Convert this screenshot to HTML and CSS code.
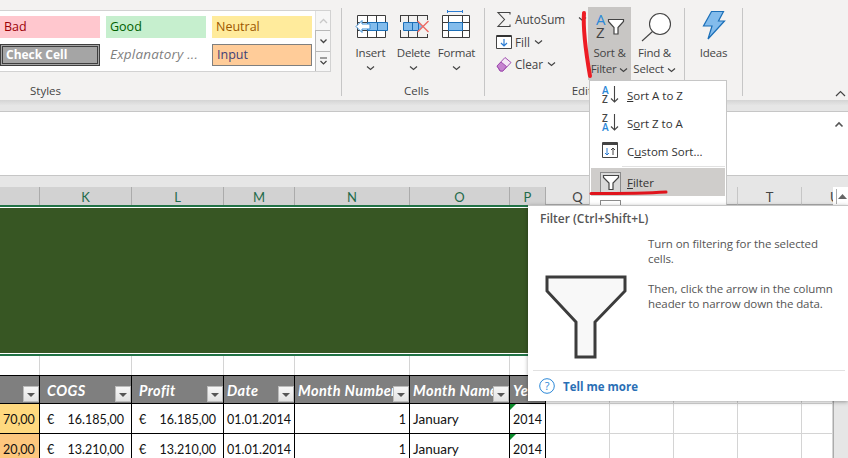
FILE: index.html
```html
<!DOCTYPE html>
<html lang="en">
<head>
  <meta charset="UTF-8" />
  <title>Excel Filter</title>
  <link rel="stylesheet" href="styles.css">
</head>
<body>
<div class="window">
  <div class="ribbon">
    <section class="group group-styles">
      <div class="gallery">
        <div class="style-grid">
          <div class="style style-bad">Bad</div>
          <div class="style style-good">Good</div>
          <div class="style style-neutral">Neutral</div>
          <div class="style style-check">Check Cell</div>
          <div class="style style-expl">Explanatory ...</div>
          <div class="style style-input">Input</div>
        </div>
        <div class="gallery-scroll">
          <div class="scroll-btn off"><svg width="9" height="6" viewBox="0 0 9 6"><path d="M1 5l3.500-3.500L8 5" fill="none" stroke="#c8c8c8" stroke-width="1.300"/></svg></div>
          <div class="scroll-btn"><svg width="9" height="6" viewBox="0 0 9 6"><path d="M1.500 1.500L4.500 4.500l3-3" fill="none" stroke="#444" stroke-width="1.300"/></svg></div>
          <div class="scroll-btn"><svg width="9" height="9" viewBox="0 0 9 9"><path d="M1 1h7M1.500 4L4.500 7l3-3" fill="none" stroke="#444" stroke-width="1.200"/></svg></div>
        </div>
      </div>
      <div class="group-label label-styles">Styles</div>
    </section>
    <div class="sep"></div>

    <section class="group group-cells">
      <div class="big-row">
        <div class="big-btn">
          <svg class="big-icon" width="36" height="28" viewBox="0 0 36 28">
            <path d="M4.500 5.500h28v22h-28z" fill="#fff" stroke="#3c3c3c"/>
            <path d="M14.500 5v23M23.500 5v23M4.500 12.500h28M4.500 20.500h28" stroke="#3c3c3c" fill="none"/>
            <path d="M14.500 12.500h20v8h-20z" fill="#83bcec" stroke="#1b6fb8"/>
            <path d="M24.500 12.500v8" stroke="#1b6fb8"/>
            <path d="M3 16.500l6-6v3.500h8v5H9v3.500z" fill="#fff" stroke="#3d8fd6"/>
          </svg>
          <span class="big-label">Insert</span>
          <svg class="chev" width="9" height="6" viewBox="0 0 9 6"><path d="M1 1.500l3.500 3 3.500-3" fill="none" stroke="#444" stroke-width="1.200"/></svg>
        </div>
        <div class="big-btn">
          <svg class="big-icon" width="36" height="28" viewBox="0 0 36 28">
            <path d="M4 5.500h28M4 27.500h28M12.500 5v7M12.500 21v7M21.500 5v7M21.500 21v7M4.500 5v7M4.500 20v8M31.500 5v5M31.500 24v4" stroke="#3c3c3c" fill="none"/>
            <path d="M7.500 12.500h15v8h-15z" fill="#83bcec" stroke="#1b6fb8"/>
            <path d="M16.500 12.500v8" stroke="#1b6fb8"/>
            <path d="M23 13l4 3.500-4 3.500z" fill="#83bcec"/>
            <path d="M21.500 11l11 11M32.500 11l-11 11" stroke="#ec6a64" stroke-width="1.400" fill="none"/>
          </svg>
          <span class="big-label">Delete</span>
          <svg class="chev" width="9" height="6" viewBox="0 0 9 6"><path d="M1 1.500l3.500 3 3.500-3" fill="none" stroke="#444" stroke-width="1.200"/></svg>
        </div>
        <div class="big-btn">
          <svg class="big-icon" width="36" height="28" viewBox="0 0 36 28">
            <path d="M8.500 0v3M23.500 0v3M8.500 1.500h15" stroke="#2b7cd3" fill="none"/>
            <path d="M3.500 5.500h27v22h-27z" fill="#fff" stroke="#3c3c3c"/>
            <path d="M9.500 5v23M23.500 5v23M3.500 12.500h27M3.500 20.500h27" stroke="#3c3c3c" fill="none"/>
            <path d="M9.500 12.500h14v8h-14z" fill="#83bcec" stroke="#1b6fb8"/>
          </svg>
          <span class="big-label">Format</span>
          <svg class="chev" width="9" height="6" viewBox="0 0 9 6"><path d="M1 1.500l3.500 3 3.500-3" fill="none" stroke="#444" stroke-width="1.200"/></svg>
        </div>
      </div>
      <div class="group-label">Cells</div>
    </section>
    <div class="sep"></div>

    <section class="group group-edit">
      <div class="edit-row">
        <div class="small-col">
          <div class="small-btn">
            <svg width="16" height="17" viewBox="0 0 16 17"><path d="M14 3.500V1.500H2l6.500 7L2 15.500h12v-2" fill="none" stroke="#444" stroke-width="1.100"/></svg>
            <span>AutoSum</span>
            <svg class="chev-far" width="9" height="6" viewBox="0 0 9 6"><path d="M1 1.500l3.500 3 3.500-3" fill="none" stroke="#444" stroke-width="1.200"/></svg>
          </div>
          <div class="small-btn">
            <svg width="16" height="16" viewBox="0 0 16 16"><path d="M.5 1.500h15v13H.5z" fill="#fff" stroke="#444"/><path d="M1 2h14" stroke="#333" stroke-width="2"/><path d="M8 5v7M5 9l3 3 3-3" fill="none" stroke="#2b7cd3" stroke-width="1.200"/></svg>
            <span>Fill</span>
            <svg width="9" height="6" viewBox="0 0 9 6"><path d="M1 1.500l3.500 3 3.500-3" fill="none" stroke="#444" stroke-width="1.200"/></svg>
          </div>
          <div class="small-btn">
            <svg width="16" height="16" viewBox="0 0 16 16"><path d="M1 10l8-8.500 6 5L7 15H4z" fill="#f4e8f5" stroke="#a04fb0"/><path d="M1 10l3.500 5H7l3.500-4.500L5 6z" fill="#c583cf" stroke="#a04fb0"/></svg>
            <span>Clear</span>
            <svg width="9" height="6" viewBox="0 0 9 6"><path d="M1 1.500l3.500 3 3.500-3" fill="none" stroke="#444" stroke-width="1.200"/></svg>
          </div>
        </div>
        <div class="big-btn tall is-open">
          <svg class="big-icon" width="32" height="32" viewBox="0 0 32 32">
            <text x="2" y="13" class="ic-az blue">A</text>
            <text x="2" y="26" class="ic-az">Z</text>
            <path d="M14.500 7.500h15v2l-5.500 6v6.500h-4v-6.500l-5.500-6z" fill="#fff" stroke="#444" stroke-width="1.200"/>
          </svg>
          <span class="big-label">Sort &amp;<br>Filter <svg width="9" height="6" viewBox="0 0 9 6"><path d="M1 1.500l3.500 3 3.500-3" fill="none" stroke="#444" stroke-width="1.200"/></svg></span>
        </div>
        <div class="big-btn tall find">
          <svg class="big-icon" width="36" height="32" viewBox="0 0 36 32">
            <circle cx="23" cy="12" r="10.500" fill="#fff" stroke="#444" stroke-width="1.100"/>
            <path d="M15.500 19.500L5 29" stroke="#444" stroke-width="1.100"/>
          </svg>
          <span class="big-label">Find &amp;<br>Select <svg width="9" height="6" viewBox="0 0 9 6"><path d="M1 1.500l3.500 3 3.500-3" fill="none" stroke="#444" stroke-width="1.200"/></svg></span>
        </div>
      </div>
      <div class="group-label">Editing</div>
    </section>
    <div class="sep"></div>

    <section class="group group-ideas">
      <div class="big-btn">
        <svg class="big-icon" width="24" height="30" viewBox="0 0 24 30"><path d="M9.500 1.500h12l-5 9.500h6L6 29l4-13H1.500z" fill="#83bcec" stroke="#1b6fb8" stroke-width="1.200"/></svg>
        <span class="big-label">Ideas</span>
      </div>
    </section>
    <div class="sep"></div>
    <svg class="collapse" width="11" height="7" viewBox="0 0 11 7"><path d="M1 6l4.500-4.500L10 6" fill="none" stroke="#444" stroke-width="1.200"/></svg>
  </div>
  <div class="ribbon-shadow"></div>

  <div class="formula">
    <svg width="10" height="7" viewBox="0 0 10 7"><path d="M1.500 5.500L5 2l3.500 3.500" fill="none" stroke="#555" stroke-width="1.600"/></svg>
  </div>
  <div class="strip"></div>

  <div class="sheet">
    <div class="row col-head">
      <div class="hc sel"></div><div class="hc sel">K</div><div class="hc sel">L</div><div class="hc sel">M</div><div class="hc sel">N</div><div class="hc sel">O</div><div class="hc sel">P</div>
      <div class="hc">Q</div><div class="hc">R</div><div class="hc">S</div><div class="hc">T</div><div class="hc hc-cut">U</div>
    </div>
    <div class="banner"><div class="banner-fill"></div></div>
    <div class="row blank">
      <div class="c"></div><div class="c"></div><div class="c"></div><div class="c"></div><div class="c"></div><div class="c"></div><div class="c"></div><div class="c"></div><div class="c"></div><div class="c"></div><div class="c"></div><div class="c"></div>
    </div>
    <div class="row thead">
      <div class="th"><span></span><i class="drop"></i></div>
      <div class="th pl7"><span>COGS</span><i class="drop"></i></div>
      <div class="th pl7"><span>Profit</span><i class="drop"></i></div>
      <div class="th"><span>Date</span><i class="drop"></i></div>
      <div class="th"><span>Month Number</span><i class="drop"></i></div>
      <div class="th"><span>Month Name</span><i class="drop"></i></div>
      <div class="th"><span>Year</span></div>
      <div class="c"></div><div class="c"></div><div class="c"></div><div class="c"></div><div class="c"></div>
    </div>
    <div class="row data">
      <div class="td n amount fill-a">70,00</div>
      <div class="td n euro"><span>€</span><span>16.185,00</span></div>
      <div class="td n euro"><span>€</span><span>16.185,00</span></div>
      <div class="td n">01.01.2014</div>
      <div class="td n num">1</div>
      <div class="td">January</div>
      <div class="td n year">2014</div>
      <div class="c"></div><div class="c"></div><div class="c"></div><div class="c"></div><div class="c"></div>
    </div>
    <div class="row data">
      <div class="td n amount fill-b">20,00</div>
      <div class="td n euro"><span>€</span><span>13.210,00</span></div>
      <div class="td n euro"><span>€</span><span>13.210,00</span></div>
      <div class="td n">01.01.2014</div>
      <div class="td n num">1</div>
      <div class="td">January</div>
      <div class="td n year">2014</div>
      <div class="c"></div><div class="c"></div><div class="c"></div><div class="c"></div><div class="c"></div>
    </div>
    <div class="vscroll"></div>
    <div class="vscroll-up"><svg width="9" height="5" viewBox="0 0 9 5"><path d="M0 5l4.500-5L9 5z" fill="#666"/></svg></div>
  </div>

  <!-- sort & filter dropdown -->
  <div class="menu">
    <div class="menu-item">
      <svg width="24" height="24" viewBox="0 0 24 24"><text x="2" y="11" class="ic-sm blue">A</text><text x="2" y="19.500" class="ic-sm">Z</text><path d="M14.500 3v16M11 15.500l3.500 3.500 3.500-3.500" fill="none" stroke="#444" stroke-width="1.100"/></svg>
      <span><u>S</u>ort A to Z</span>
    </div>
    <div class="menu-item">
      <svg width="24" height="24" viewBox="0 0 24 24"><text x="2" y="11" class="ic-sm">Z</text><text x="2" y="19.500" class="ic-sm blue">A</text><path d="M14.500 3v16M11 15.500l3.500 3.500 3.500-3.500" fill="none" stroke="#444" stroke-width="1.100"/></svg>
      <span>S<u>o</u>rt Z to A</span>
    </div>
    <div class="menu-item">
      <svg width="24" height="24" viewBox="0 0 24 24"><path d="M2.500 3.500h15v15h-15z" fill="#fff" stroke="#444"/><path d="M3 4.500h14" stroke="#444" stroke-width="3"/><path d="M7 9v7M5 14l2 2 2-2" fill="none" stroke="#2b7cd3"/><path d="M13 16V9M11 11l2-2 2 2" fill="none" stroke="#444"/></svg>
      <span>C<u>u</u>stom Sort...</span>
    </div>
    <div class="menu-sep"></div>
    <div class="menu-item active">
      <div class="icon-box"><svg width="18" height="18" viewBox="0 0 18 18"><path d="M1.500 2.500h15v2L11 10v6.500H7V10L1.500 4.500z" fill="#fff" stroke="#444" stroke-width="1.200"/></svg></div>
      <span><u>F</u>ilter</span>
    </div>
    <div class="menu-item">
      <div class="icon-box plain"></div>
    </div>
  </div>

  <!-- tooltip for Filter -->
  <div class="tip">
    <div class="tip-title">Filter (Ctrl+Shift+L)</div>
    <div class="tip-body">
      <svg class="tip-funnel" width="82" height="84" viewBox="0 0 82 84"><path d="M2 2h78v14L50 47v35H31V47L2 16z" fill="#f8f8f8" stroke="#3c3c3c" stroke-width="3"/></svg>
      <div class="tip-text">
        <p>Turn on filtering for the selected cells.</p>
        <p>Then, click the arrow in the column header to narrow down the data.</p>
      </div>
    </div>
    <div class="tip-foot">
      <svg width="16" height="16" viewBox="0 0 16 16"><circle cx="8" cy="8" r="7.300" fill="none" stroke="#2b88d8"/><text x="8" y="12" class="ic-help">?</text></svg>
      <span>Tell me more</span>
    </div>
  </div>

  <!-- red marker strokes on top of the screenshot -->
  <svg class="marks" width="848" height="458" viewBox="0 0 848 458">
    <path d="M584 13c-1 14 2 40 6 63" fill="none" stroke="#ed1c24" stroke-width="4" stroke-linecap="round"/>
    <path d="M591 193.500c26 0 52 0 75-1.500" fill="none" stroke="#e0141c" stroke-width="3" stroke-linecap="round"/>
  </svg>
</div>
</body>
</html>
```

FILE: styles.css
```css
* {
  box-sizing: border-box;
}
body {
  margin: 0;
  background: #fff;
  font-family: 'Open Sans', sans-serif;
  color: #444;
  overflow: hidden;
}
svg {
  overflow: visible;
}
.window {
  position: relative;
  width: 848px;
  height: 458px;
  overflow: hidden;
}

/* ribbon */
.ribbon {
  display: flex;
  position: relative;
  height: 100px;
  background: #f3f2f1;
}
.ribbon-shadow {
  height: 11px;
  background: linear-gradient(#d4d4d4, #e6e6e6 50%, #e6e6e6);
}
.group {
  display: flex;
  flex-direction: column;
  height: 100px;
}
.group-label {
  margin-top: auto;
  height: 17px;
  font-size: 11.5px;
  line-height: 16px;
  text-align: center;
  color: #444;
}
.label-styles {
  text-align: left;
  padding-left: 30px;
}
.sep {
  width: 1px;
  margin: 8px 0 4px;
  background: #c6c6c6;
}
.group-styles {
  width: 341px;
}
.gallery {
  display: flex;
  width: 331px;
  height: 62px;
  margin-top: 10px;
  background: #fff;
  border: 1px solid #d2d2d2;
  border-left: 0;
}
.style-grid {
  display: grid;
  grid-template-columns: repeat(3, 100px);
  grid-auto-rows: 22px;
  gap: 6px;
  padding-top: 5px;
  width: 315px;
}
.style {
  font-size: 12.5px;
  line-height: 22px;
  padding-left: 4px;
}
.style-bad { background: #ffc7ce; color: #9c0006; }
.style-good { background: #c6efce; color: #006100; }
.style-neutral { background: #ffeb9c; color: #9c5700; }
.style-check {
  background: #a5a5a5;
  color: #fff;
  font-weight: 700;
  line-height: 16px;
  padding-left: 3px;
  border: 3px double #3f3f3f;
  font-size: 12px;
}
.style-expl {
  color: #7f7f7f;
  font-style: italic;
  font-size: 13.5px;
  letter-spacing: .2px;
  line-height: 20px;
  white-space: nowrap;
}
.style-input {
  background: #ffcc99;
  color: #3f3f76;
  border: 1px solid #7f7f7f;
  line-height: 20px;
}
.gallery-scroll {
  display: flex;
  flex-direction: column;
  width: 15px;
}
.scroll-btn {
  flex: 1;
  display: flex;
  align-items: center;
  justify-content: center;
  border-left: 1px solid #b8b8b8;
  border-top: 1px solid #b8b8b8;
  background: #f6f6f6;
}
.scroll-btn.off {
  border-color: #e0e0e0;
  border-top: 0;
}
.group-cells {
  width: 142px;
  padding-left: 7px;
}
.big-row {
  display: flex;
}
.big-btn {
  display: flex;
  flex-direction: column;
  align-items: center;
  width: 43px;
  height: 73px;
  margin-top: 7px;
  padding-top: 3px;
  font-size: 11.5px;
}
.big-icon {
  display: block;
  flex: none;
}
.big-label {
  margin-top: 7px;
  line-height: 16px;
  letter-spacing: -.2px;
  text-align: center;
  white-space: nowrap;
}
.chev {
  margin-top: 4px;
}
.group-edit {
  width: 199px;
  padding-left: 11px;
}
.edit-row {
  display: flex;
}
.small-col {
  width: 92px;
  padding-top: 8px;
}
.small-btn {
  display: flex;
  align-items: center;
  gap: 3px;
  height: 22.5px;
  font-size: 11.7px;
}
.small-btn span {
  margin-right: 1px;
}
.chev-far {
  margin-left: 9px;
}
.tall {
  padding-top: 5px;
}
.is-open {
  background: #c8c6c4;
}
.find {
  margin-left: 2px;
}
.tall .big-label {
  margin-top: 1px;
}
.group-ideas {
  width: 57px;
  padding-left: 7px;
}
.group-ideas .big-label {
  margin-top: 5px;
}
.collapse {
  position: absolute;
  left: 835px;
  top: 90px;
}
.ic-az {
  font: 15px 'Open Sans', sans-serif;
  fill: #444;
}
.ic-sm {
  font: 600 10px 'Open Sans', sans-serif;
  fill: #444;
}
.blue {
  fill: #2b88d8;
}

/* formula bar */
.formula {
  display: flex;
  justify-content: flex-end;
  height: 65px;
  padding: 9px 4px 0 0;
  border-top: 1px solid #c6c6c6;
  border-bottom: 1px solid #c6c6c6;
  background: #fff;
}
.strip {
  height: 11px;
  background: #e6e6e6;
}

/* sheet */
.sheet {
  position: relative;
  font-family: 'Lato', sans-serif;
  color: #111;
}
.row {
  display: grid;
  grid-template-columns: 40px 92px 92px 71px 115px 100px 36px 64px 64px 64px 64px 31px;
}
.col-head {
  height: 18px;
}
.hc {
  background: #e6e6e6;
  border-right: 1px solid #c6c6c6;
  border-bottom: 1px solid #ababab;
  font-size: 13px;
  line-height: 20px;
  text-align: center;
  color: #444;
  overflow: hidden;
}
.hc-cut {
  padding-left: 28px;
  text-align: left;
  border-right: 0;
}
.hc.sel {
  background: #d2d2d2;
  border-right-color: #ababab;
  border-bottom: 0;
  color: #1f6b4a;
}
.banner {
  height: 151px;
  padding: 1px 0;
  border-top: 2px solid #217346;
  border-bottom: 2px solid #217346;
}
.banner-fill {
  height: 100%;
  background: #375623;
}
.blank {
  height: 19px;
}
.c {
  border-right: 1px solid #d4d4d4;
  border-bottom: 1px solid #d4d4d4;
}
.blank .c {
  border-bottom: 0;
}
.thead {
  height: 29px;
}
.th {
  display: flex;
  justify-content: space-between;
  min-width: 0;
  background: #7f7f7f;
  border-top: 1px solid #000;
  border-right: 1px solid #000;
  border-bottom: 1px solid #000;
  padding-left: 3px;
  color: #fff;
  font-size: 14.5px;
  font-weight: 700;
  font-style: italic;
  letter-spacing: .4px;
  line-height: 29px;
  overflow: hidden;
  white-space: nowrap;
}
.th span {
  flex: 1;
  min-width: 0;
  overflow: hidden;
}
.th.pl7 {
  padding-left: 7px;
}
.drop {
  flex: none;
  align-self: flex-end;
  position: relative;
  width: 16px;
  height: 16px;
  background: linear-gradient(#f7f7f7, #e2e2e2);
  border: 1px solid #bbb;
  margin-bottom: 1px;
}
.drop::after {
  content: "";
  position: absolute;
  left: 3px;
  top: 6px;
  border: 4px solid transparent;
  border-top: 4px solid #555;
  border-bottom: 0;
}
.data {
  height: 30px;
}
.td {
  position: relative;
  border-right: 1px solid #000;
  border-bottom: 1px solid #000;
  padding: 0 3px;
  font-size: 13.5px;
  line-height: 31px;
  white-space: nowrap;
  overflow: hidden;
}
.n {
  font-size: 12.5px;
}
.num {
  text-align: right;
}
.amount {
  padding-right: 7px;
  text-align: right;
}
.euro {
  display: flex;
  justify-content: space-between;
  padding: 0 7px;
}
.fill-a { background: #ffd97f; }
.fill-b { background: #fdc77e; }
.year::before {
  content: "";
  position: absolute;
  left: 0;
  top: 0;
  border-top: 6px solid #0a8a2a;
  border-right: 6px solid transparent;
}
.vscroll {
  position: absolute;
  right: 0;
  top: 18px;
  width: 15px;
  height: 260px;
  background: #e6e6e6;
  border-left: 1px solid #ababab;
}
.vscroll-up {
  position: absolute;
  right: 0;
  top: 2px;
  display: flex;
  align-items: center;
  justify-content: center;
  width: 12px;
  height: 15px;
  background: #fff;
  border-left: 1px solid #ababab;
}

/* dropdown */
.menu {
  position: absolute;
  left: 589px;
  top: 80px;
  width: 138px;
  height: 126px;
  background: #fff;
  border: 1px solid #c6c6c6;
  overflow: hidden;
  font-size: 11.5px;
  color: #333;
  z-index: 2;
}
.menu-item {
  display: flex;
  align-items: center;
  gap: 3px;
  height: 28px;
  margin: 0 1px;
  padding-left: 9px;
  white-space: nowrap;
}
.menu-sep {
  height: 1px;
  margin: 1px 1px 1px 32px;
  background: #e1e1e1;
}
.menu-item.active {
  background: #cfcdcb;
}
.icon-box {
  display: flex;
  align-items: center;
  justify-content: center;
  width: 21px;
  height: 21px;
  margin-right: 3px;
  background: #d9d9d9;
  border: 1px solid #8a8a8a;
}
.icon-box.plain {
  background: #fff;
}
.menu-item svg {
  flex: none;
}

/* tooltip */
.tip {
  position: absolute;
  left: 528px;
  top: 205px;
  width: 320px;
  height: 196px;
  background: #fff;
  border-top: 1px solid #c6c6c6;
  box-shadow: 0 1px 4px rgba(0, 0, 0, .35);
  font-size: 11.5px;
  color: #555;
  z-index: 3;
  display: flex;
  flex-direction: column;
}
.tip-title {
  padding: 4px 0 0 12px;
  font-size: 12px;
  font-weight: 600;
  line-height: 18px;
}
.tip-body {
  display: flex;
  flex: 1;
  padding-left: 17px;
}
.tip-funnel {
  flex: none;
  margin-top: 47px;
}
.tip-text {
  width: 190px;
  margin: 8px 0 0 21px;
  line-height: 15px;
  letter-spacing: -.08px;
}
.tip-text p {
  margin: 0 0 15px;
}
.tip-foot {
  display: flex;
  align-items: center;
  gap: 8px;
  height: 31px;
  margin: 0 3px 0 5px;
  padding-left: 6px;
  border-top: 1px solid #e1e1e1;
  color: #2a6fb5;
  font-weight: 700;
}
.ic-help {
  font: 11px 'Open Sans', sans-serif;
  fill: #2b88d8;
  text-anchor: middle;
}

.marks {
  position: absolute;
  left: 0;
  top: 0;
  z-index: 4;
  pointer-events: none;
}
```
